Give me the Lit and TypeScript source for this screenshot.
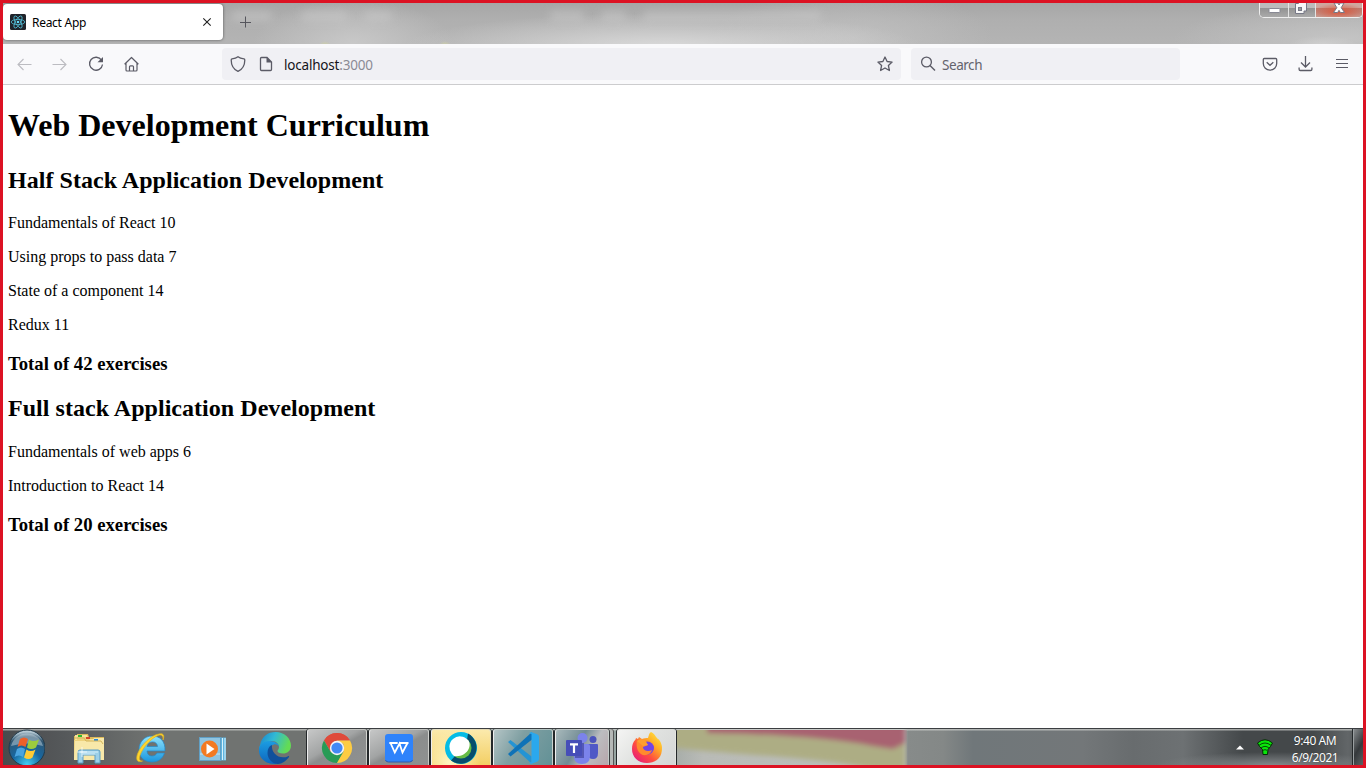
import { LitElement, html, svg, css } from "lit";
import { customElement } from "lit/decorators.js";

const icon = (w: number, h: number, body: unknown, box = `0 0 ${w} ${h}`) =>
  html`<svg width=${w} height=${h} viewBox=${box} fill="none" aria-hidden="true">${body}</svg>`;

const line = "#5b5b66";

@customElement("window-titlebar")
class WindowTitlebar extends LitElement {
  static styles = css`
    :host { display: flex; height: 41px; position: relative; overflow: hidden;
      font-family: "Noto Sans", "Open Sans", sans-serif;
      background:
        radial-gradient(ellipse 34px 9px at 1320px 42px, #cfcfcf, transparent),
        radial-gradient(ellipse 6px 4px at 322px 42px, #cdcfa8, transparent),
        radial-gradient(ellipse 6px 4px at 442px 42px, #cdcfa8, transparent),
        radial-gradient(ellipse 260px 34px at 660px 44px, #dadada, transparent),
        radial-gradient(ellipse 100px 45px at 350px 41px, #c8c8c8, transparent),
        radial-gradient(ellipse 140px 50px at 850px 35px, #c6c6c6aa, transparent),
        radial-gradient(ellipse 170px 35px at 1340px 36px, #c4c4c4, transparent),
        linear-gradient(#a6a6a6, #afafaf 40%, #b4b4b4); }
    .smudge { position: absolute; height: 8px; border-radius: 4px; background: #cbcbcb; opacity: .6; filter: blur(4px); top: 9px; }
    .s1 { left: 229px; width: 40px; } .s2 { left: 298px; width: 46px; } .s3 { left: 362px; width: 27px; }
    .s4 { left: 547px; width: 34px; } .s5 { left: 598px; width: 25px; } .s6 { left: 640px; width: 178px; }
    .tab { position: relative; margin-top: 1px; width: 220px; height: 36px; box-sizing: border-box; padding: 0 10px 0 7px;
      background: #fff; border-radius: 4px; box-shadow: 0 0 3px #0008; display: flex; align-items: center; }
    .title { font-size: 12px; line-height: 16px; margin-left: 6px; padding-top: 2px; flex: 1; color: #000; letter-spacing: -.28px; }
    .plus { position: relative; margin: 13px 0 0 17px; }
    .controls { position: relative; margin-left: auto; display: flex; width: 102px; height: 14px; border: 1px solid #eee;
      border-top: 0; border-radius: 0 0 5px 5px; box-shadow: inset 0 0 0 1px #7779; overflow: hidden; }
    .ctl { height: 14px; display: flex; justify-content: center; border-right: 1px solid #e4e4e4; box-sizing: border-box;
      background: linear-gradient(#bcbcbc 0 35%, #929292 36%, #aaa); }
    .min { width: 29px; } .max { width: 27px; padding-right: 2px; }
    .close { width: 46px; border: 0; background: radial-gradient(ellipse 26px 8px at 50% 60%, #d8553a, transparent), linear-gradient(#cfa79f 0 35%, #b97a6e 36%, #c99a90); }
    svg { display: block; flex: none; }
  `;
  render() {
    return html`
      <span class="smudge s1"></span><span class="smudge s2"></span><span class="smudge s3"></span>
      <span class="smudge s4"></span><span class="smudge s5"></span><span class="smudge s6"></span>
      <div class="tab">
        ${icon(16, 16, svg`<rect width="16" height="16" rx="1.5" fill="#20232a"/>
          <g stroke="#53bfd8" stroke-width=".8"><ellipse cx="8" cy="8" rx="6.8" ry="2.6"/>
          <ellipse cx="8" cy="8" rx="6.8" ry="2.6" transform="rotate(60 8 8)"/>
          <ellipse cx="8" cy="8" rx="6.8" ry="2.6" transform="rotate(120 8 8)"/></g><circle cx="8" cy="8" r="1.3" fill="#61dafb"/>`)}
        <span class="title">React App</span>
        ${icon(12, 12, svg`<path d="M2.3 2.3l7.4 7.4M9.7 2.3L2.3 9.7" stroke="#222" stroke-width="1.1"/>`)}
      </div>
      <div class="plus">${icon(12, 12, svg`<path d="M5.500 .5v11M0 6.500h11" stroke="#55555c" stroke-width="1"/>`)}</div>
      <div class="controls">
        <div class="ctl min">${icon(14, 14, svg`<rect x="2" y="5.5" width="11" height="4" rx=".5" fill="#fff" stroke="#888994"/>`)}</div>
        <div class="ctl max">${icon(14, 14, svg`<path d="M4.500-1h8v9h-2.500v2.500h-8.500V.5h3z" fill="#f7f7f7" stroke="#777987"/><rect x="4.500" y="4.500" width="3" height="3" fill="#999" stroke="#777987"/>`)}</div>
        <div class="ctl close">${icon(14, 14, svg`<path d="M2 0h3.800L7 2l1.200-2H12L9.200 4.700 12.500 9.500H8.400L7 7.300 5.600 9.500H1.500L4.800 4.700z" fill="#fff" stroke="#777987"/>`)}</div>
      </div>`;
  }
}

@customElement("browser-toolbar")
class BrowserToolbar extends LitElement {
  static styles = css`
    :host { display: flex; align-items: center; height: 41px; box-sizing: border-box; padding: 0 13px; background: #f9f9fb;
      border-bottom: 1px solid #ccccce; font-family: "Noto Sans", "Open Sans", sans-serif; font-size: 13.5px; color: #15141a; }
    svg { display: block; flex: none; }
    .nav { display: flex; gap: 20px; width: 206px; }
    .field { display: flex; align-items: center; height: 32px; border-radius: 4px; background: #f0f0f4; box-sizing: border-box; }
    .url { width: 679px; padding: 0 8px; }
    .shield { margin-right: 12px; }
    .address { flex: 1; margin-left: 10px; letter-spacing: -.2px; line-height: 20px; padding-top: 2px; }
    .port { color: #8b8b94; }
    .search { width: 269px; margin-left: 10px; padding: 0 9px; }
    .hint { color: #63636c; margin-left: 6px; letter-spacing: -.45px; line-height: 20px; padding-top: 2px; }
    .actions { display: flex; gap: 20px; margin-left: auto; }
  `;
  render() {
    return html`
      <div class="nav">
        ${icon(16, 16, svg`<path d="M15.500 8.500H2M7.500 3L2 8.500l5.500 5.500" stroke="#bcbcc1" stroke-width="1.100"/>`)}
        ${icon(16, 16, svg`<path d="M.5 8.500H14M8.500 3L14 8.500 8.500 14" stroke="#bcbcc1" stroke-width="1.100"/>`)}
        ${icon(16, 16, svg`<path d="M13.500 4.200A6.500 6.500 0 1 0 14.500 8.500" stroke=${line} stroke-width="1.300"/><path d="M15 1v5.200H9.500z" fill=${line}/>`)}
        ${icon(16, 16, svg`<path d="M.6 8.200L7.500 1.500l6.900 6.700M2 7v7q0 1 1 1h9q1 0 1-1V7M5.500 14.800v-4q0-1 1-1h2q1 0 1 1v4" stroke=${line} stroke-width="1.200" stroke-linejoin="round"/>`)}
      </div>
      <div class="field url">
        <div class="shield">${icon(16, 16, svg`<path d="M8 .8C6.500 2 4 2.700 2 2.900q-.8.100-.8 1c0 5.300 2.100 9.200 6.800 11.400 4.700-2.200 6.800-6.100 6.800-11.400q0-.9-.8-1C12 2.700 9.500 2 8 .8z" stroke=${line} stroke-width="1.300"/>`)}</div>
        ${icon(16, 16, svg`<path d="M3.500 1.500H9L13.500 6v7.500q0 1-1 1h-9q-1 0-1-1v-11q0-1 1-1z" stroke=${line} stroke-width="1.300"/><path d="M8.500 1l5.500 5.500H8.500z" fill=${line}/>`)}
        <span class="address">localhost<span class="port">:3000</span></span>
        ${icon(16, 16, svg`<path d="M8 1l2.100 4.500 5 .6-3.700 3.400 1 5L8 12l-4.400 2.500 1-5L.9 6.100l5-.6z" stroke=${line} stroke-width="1.300" stroke-linejoin="round"/>`)}
      </div>
      <div class="field search">
        ${icon(16, 16, svg`<circle cx="6.500" cy="6" r="4.900" stroke=${line} stroke-width="1.300"/><path d="M10 9.500l5 5" stroke=${line} stroke-width="1.400"/>`)}
        <span class="hint">Search</span>
      </div>
      <div class="actions">
        ${icon(16, 16, svg`<path d="M2.300 2.500h11.400q1 0 1 1V7.500a6.700 6.700 0 0 1-13.400 0v-4q0-1 1-1z" stroke=${line} stroke-width="1.300"/><path d="M4.700 6.300L8 9.300l3.300-3" stroke=${line} stroke-width="1.300"/>`)}
        ${icon(16, 16, svg`<path d="M7.500 0v10.500M3 6.500L7.500 11 12 6.500M1.100 11.500v1.800q0 1.200 1.200 1.200h10.400q1.200 0 1.200-1.200v-1.800" stroke=${line} stroke-width="1.300"/>`)}
        ${icon(16, 16, svg`<path d="M2 3.500h12M2 7.500h12M2 11.500h12" stroke=${line} stroke-width="1.100"/>`)}
      </div>`;
  }
}

interface Course { name: string; parts: [string, number][] }

@customElement("curriculum-page")
class CurriculumPage extends LitElement {
  static styles = css`
    :host { display: block; background: #fff; color: #000; overflow: hidden; padding: 0 5px;
      font: 16px "Liberation Serif", "Times New Roman", serif; }
    h1 { font-size: 32px; line-height: 37px; margin: 22px 0 23px; }
    h2 { font-size: 24px; line-height: 27px; margin: 21px 0 20.450px; letter-spacing: .04px; }
    h3 { font-size: 18.720px; line-height: 21px; margin: 19px 0; }
    p { font-size: 16px; line-height: 18px; margin: 16px 0; }
  `;
  private courses: Course[] = [
    { name: "Half Stack Application Development", parts: [["Fundamentals of React", 10], ["Using props to pass data", 7], ["State of a component", 14], ["Redux", 11]] },
    { name: "Full stack Application Development", parts: [["Fundamentals of web apps", 6], ["Introduction to React", 14]] },
  ];
  render() {
    return html`<h1>Web Development Curriculum</h1>
      ${this.courses.map((c) => html`<h2>${c.name}</h2>
        ${c.parts.map(([n, x]) => html`<p>${n} ${x}</p>`)}
        <h3>Total of ${c.parts.reduce((s, p) => s + p[1], 0)} exercises</h3>`)}`;
  }
}

const box = (body: unknown) => icon(32, 32, body);

const explorer = box(svg`
  <path d="M1 4h3V2h11l1 3h15v23H1z" fill="#dcb95a"/><path d="M2 3h12l2 4h15v21H2z" fill="#f6e29a"/>
  <path d="M4 5h11l2 4h14v19H1V8h3z" fill="#eed27c"/><path d="M2 9h17l2-3h10v22H1z" fill="#f8e8a9"/>
  <rect x="5" y="3" width="4" height="2" fill="#2db82d"/><rect x="13" y="5" width="4" height="2" fill="#d54526"/><rect x="21" y="7" width="4" height="2" fill="#2889d8"/>
  <path d="M1 6h10l2 3h15l2 3" stroke="#d3b45a"/>
  <path d="M5 31V20q0-2 2-2h18q2 0 2 2v11h-5v-8H10v8z" fill="#9dd0e8" stroke="#5a9dc5"/><path d="M7 20h18M10 22h12" stroke="#d8f1fb"/>
  <path d="M9 15v10M4 20h10" stroke="#fff" stroke-width=".7"/>`);

const ie = box(svg`
  <defs><linearGradient id="ie" x1="0" y1="0" x2="0" y2="1"><stop stop-color="#8fe3fd"/><stop offset="1" stop-color="#1996df"/></linearGradient></defs>
  <path d="M30 19H12c.3 3.300 2 5 5 5 2.300 0 4-1 5-3h7.500C27.500 27 23 30 17 30 9 30 4 25 4 17.500S9.500 4 17 4c8 0 13.500 5 13 15zM12 14.500h10.500c-.3-3-2-4.600-5-4.600s-5 1.600-5.500 4.600z" fill="url(#ie)" stroke="#2587c5" stroke-width=".7"/>
  <path d="M28 8c2-5 0-7-4-6C16 3 6 13 2.500 22c-2 6 0 9 5 7-3 .3-4-2-2-7C9 14 17 6 23 3.500c3.500-1.200 5.500 0 5 4.500z" fill="#ffd52e" stroke="#e0b321" stroke-width=".7"/>`);

const player = box(svg`
  <rect x="13" y="5.500" width="16" height="23" fill="#5fb4de"/><path d="M25.500 6v22M28 6v22" stroke="#d9f1fb"/>
  <rect x="2.500" y="5.500" width="21" height="23" fill="#8fc5e2" stroke="#609fc5"/><path d="M3 22h20" stroke="#c5e5f4"/>
  <circle cx="12.500" cy="17" r="8.500" fill="#f37a22"/><path d="M9.500 11.500v11l8-5.500z" fill="#fff"/>`);

const edge = box(svg`
  <defs><linearGradient id="e1" x1="0" y1="0" x2="1" y2=".3"><stop stop-color="#1780ce"/><stop offset=".5" stop-color="#31b9d5"/><stop offset="1" stop-color="#63db55"/></linearGradient>
  <linearGradient id="e2" x1="0" y1="0" x2="0" y2="1"><stop stop-color="#1b9de2"/><stop offset="1" stop-color="#0f66bd"/></linearGradient></defs>
  <path d="M1 13C3 4 9 0 16.500 0 26 0 32 7 32 13.500c0 5.500-4 8-8 8-3.500 0-5.500-1-5.500-2.500 0-1 1.500-1.500 1.500-4 0-3-3-6-7-6C7 9 2 13 0 18c0-2 .3-3.500 1-5z" fill="url(#e1)"/>
  <path d="M0 17c1-5 5-8 10-8 6 0 10 3 10 6-1-2-3-3-5-2.500-3 .7-5 4-5 8 0 5 4 9 9 10.500-2 .8-3 1-4 1C7 32-1 26 0 17z" fill="url(#e2)"/>
  <path d="M13 13c-3 1-4.500 4-4.500 8 0 6 5 11 10.500 11 4 0 8-3 11-7 .4-.7 0-1.200-.8-.8C21 28 12 22 13 13z" fill="#10509b"/>`);

const chrome = box(svg`
  <path d="M3 8.500A15 15 0 0 1 29 8.500z" fill="#df4a3b"/><path d="M3 8.500a15 15 0 0 1 26 0H16v7.500l-6.500 3.800z" fill="#df4a3b"/>
  <path d="M3 8.500A15 15 0 0 0 16 31l6.500-11.200L16 16l-6.500 3.800z" fill="#289b56"/>
  <path d="M29 8.500A15 15 0 0 1 16 31l6.500-11.200V12L16 8.500z" fill="#fdcc43"/>
  <circle cx="16" cy="16" r="7.200" fill="#f5f5f5"/><circle cx="16" cy="16" r="5.600" fill="#4389f5"/>`);

const wps = box(svg`
  <rect x="2" y="2" width="28" height="28" rx="3" fill="#2f83fb"/><path d="M2.500 28q.5 2 3 2h21q2.500 0 3-2" stroke="#3159a7"/>
  <path d="M6.300 11h8.400M7.500 11l4.300 9.500 4.700-9 3 9L24.500 11M16 11h9.500" stroke="#fff" stroke-width="1.800"/>`);

const webex = box(svg`
  <circle cx="16" cy="16" r="16" fill="#06bce5"/>
  <path d="M23 1.600a16 16 0 1 1-17 27L10 24 22 8z" fill="#074d6c"/>
  <circle cx="16" cy="16" r="10.500" fill="#67bc46"/><path d="M7 22A10.500 10.500 0 0 1 23 8c5 6-2 18-14 16z" fill="#fff"/>`);

const vscode = box(svg`
  <path d="M1 10l2.500-2 21 16.500v7z" fill="#2494d4"/><path d="M1 22l2.500 2.500L25 7.500V0z" fill="#0e72b7"/>
  <path d="M24 0l6 2.300Q32 3 32 5v22q0 2-2 2.700L24 32l-2-1.200 2.500-.8V2L22 1.200z" fill="#2ba8ed"/>`);

const teams = box(svg`
  <circle cx="27" cy="7.500" r="3.500" fill="#4b53bc"/><circle cx="16.500" cy="6" r="5" fill="#7b83eb"/>
  <path d="M22 12h9q1 0 1 1v8q0 6-5 6t-5-5z" fill="#4f58c6"/><path d="M8 12h14q2 0 2 2v10q0 8-8 8T8 24z" fill="#7b83eb"/>
  <path d="M9 11h9v15H9z" fill="#5358b5"/><rect x="0" y="8" width="16" height="16" rx="1" fill="#464eb8"/>
  <path d="M4 12.300h8M8 12.300V21" stroke="#fff" stroke-width="2.200"/>`);

const firefox = box(svg`
  <defs><linearGradient id="fx" x1="1" y1="0" x2=".1" y2="1"><stop stop-color="#fff34b"/><stop offset=".35" stop-color="#ffae25"/><stop offset=".65" stop-color="#ff4c40"/><stop offset="1" stop-color="#e31583"/></linearGradient></defs>
  <path d="M20 0c4 2 4 4 6 6 1 1 1 2 1.500 1 3 4 4 7 3.300 12C30 27 23.500 31 16 31 7 31 1 25 1 17c0-4 1-7 3.500-9.500L5 6l2 1 1-2 3 2c2-1 4-1 6-1 1-3 1-5 3-6z" fill="url(#fx)"/>
  <circle cx="16.500" cy="16" r="6.500" fill="#7145e5"/><path d="M6 9l7 1 4 3-5 2c0 4 6 5 9 3-1 4-7 7-11 4-4-3-5-8-4-13z" fill="#ff8a2d"/>
  <path d="M6 9c2-2 6-2 8-1l3 5-5 1z" fill="#ff9f30"/>`);

@customElement("task-bar")
class TaskBar extends LitElement {
  static styles = css`
    :host { display: flex; position: relative; height: 37px; box-sizing: border-box; border-top: 1px solid #3b3e41; overflow: hidden;
      font-family: "Noto Sans", "Open Sans", sans-serif;
      background: linear-gradient(#d2d4d1aa 0 1px, transparent 2px),
        radial-gradient(ellipse 120px 14px at 1270px 37px, #878b8e, transparent),
        linear-gradient(90deg, #494b4d 0, #55585a 60px, #707371 150px, #707371 300px, #85a09f 520px, #a0a7a3 660px, #b9bbb7 700px, #bcbfbb 900px, #878b8a 905px, #848887 940px, #70777a 970px, #737779 1080px, #686c6e 1130px, #6d7173 1180px, #44484a 1240px, #44484a 1310px, #626668 1345px, #4c4f51); }
    svg { display: block; flex: none; }
    .wallpaper { position: absolute; left: 674px; top: 1px; width: 230px; height: 35px; }
    .start { width: 55px; position: relative; }
    .orb { margin-left: 4px; }
    .pin { width: 62px; display: flex; justify-content: center; padding-top: 3px; box-sizing: border-box; position: relative; }
    .task { position: relative; width: 60px; margin-right: 2px; height: 37px; box-sizing: border-box; padding-top: 2px; display: flex; justify-content: center;
      border: 1px solid #ddded9aa; border-left-color: #eee; border-bottom: 0; border-radius: 3px 3px 0 0; box-shadow: -1px 0 #24282a, 1px 0 #24282a;
      background: linear-gradient(150deg, #c6c7c7, #a2a4a4 42%, #8b8d8d 52%, #8f9191); }
    .first { margin-left: 1px; }
    .webex { background: radial-gradient(circle at 30% 90%, #fff5c1, transparent 60%), linear-gradient(#fbeaac, #f3ce62); }
    .vscode { background: linear-gradient(120deg, #b4c4c5, #7f9fa2 40%, #629196); }
    .teams { width: 54px; margin-right: 8px; background: linear-gradient(120deg, #a8b9bb, #718b94 42%, #bcbdc0 64%, #b7a5ab); box-shadow: -1px 0 #24282a, 1px 0 #3b3e41, 4px 0 #b5b8b6, 5px 0 #555; }
    .firefox { width: 59px; background: linear-gradient(130deg, #f4f4f3, #dfe1df 50%, #d4d6d5); }
    .tray { position: relative; margin-left: auto; display: flex; align-items: center; }
    .signal { margin-left: 12px; }
    .clock { width: 60px; margin: 4px 7px 0 11px; color: #fff; text-align: center; font-size: 12px; line-height: 17px; letter-spacing: -.45px; text-shadow: 0 0 1px #0008; }
    .peek { width: 11px; height: 100%; box-sizing: border-box; border-left: 1px solid #25292b; box-shadow: inset 1px 0 #9a9fa1; background: linear-gradient(120deg, #8c9092, #35393c 55%, #5c6163); }
  `;
  render() {
    return html`
      <svg class="wallpaper" viewBox="0 0 230 35" preserveAspectRatio="none">
        <defs><filter id="soft"><feGaussianBlur stdDeviation="2.500"/></filter></defs>
        <g filter="url(#soft)"><path d="M-8-6h236v48H205C150 26 60 26-8 17z" fill="#adad84"/><path d="M30-6h198v19l-12 6-20-3Q140 5 30 3z" fill="#a86271"/></g>
      </svg>
      <div class="start">${html`<svg class="orb" width="38" height="37" viewBox="0 0 38 37">
        <defs><radialGradient id="orb" cx=".5" cy=".95" r=".9"><stop stop-color="#43cdf2"/><stop offset=".45" stop-color="#1767a1"/><stop offset=".85" stop-color="#315772"/><stop offset="1" stop-color="#b7cad5"/></radialGradient></defs>
        <circle cx="20" cy="19" r="18" fill="url(#orb)" stroke="#213a4b"/><path d="M4 17A16.500 16.500 0 0 1 36 17Q20 12 4 17z" fill="#e5f0f5" opacity=".4"/>
        <path d="M13 10q4-3 8 0l-2.500 8q-4-3-8 0z" fill="#ee6029"/><path d="M22 10.500q4 3 10 0l-3 8q-5 3-9 0z" fill="#9ccc3e"/>
        <path d="M10 20q4-3 8 0l-2 8q-4-3-8.500 0z" fill="#4ba4df"/><path d="M19.500 20.500q4 3 9 0l-3 8q-4 3-8.500 0z" fill="#ffcb35"/></svg>`}</div>
      ${[explorer, ie, player, edge].map((i) => html`<div class="pin">${i}</div>`)}
      <div class="task first">${chrome}</div><div class="task">${wps}</div><div class="task webex">${webex}</div>
      <div class="task vscode">${vscode}</div><div class="task teams">${teams}</div><div class="task firefox">${firefox}</div>
      <div class="tray">
        ${icon(8, 5, svg`<path d="M0 4.500L4 .5l4 4z" fill="#fff"/>`)}
        <div class="signal">${icon(18, 18, svg`
          <path d="M1.500 5Q9-1.500 16.500 5L14.500 8.500 12 11.500 11.500 16.500h-4.500L6.500 11.500 3.500 8.500z" fill="#0ae70a" stroke="#042b04" stroke-width="1"/>
          <path d="M3 7.300q6-4.600 12 0M5 10q4-3.300 8 0M7 12.300q2-1.300 4 0" stroke="#053b05" stroke-width=".9"/>`)}</div>
        <div class="clock">9:40 AM<br>6/9/2021</div>
        <div class="peek"></div>
      </div>`;
  }
}

@customElement("app-root")
class AppRoot extends LitElement {
  static styles = css`
    :host { display: grid; grid-template-rows: 41px 41px 1fr 37px; width: 1366px; height: 768px; box-sizing: border-box;
      border: 3px solid #dc1223; overflow: hidden; background: #fff; }
  `;
  render() {
    return html`<window-titlebar></window-titlebar><browser-toolbar></browser-toolbar><curriculum-page></curriculum-page><task-bar></task-bar>`;
  }
}
